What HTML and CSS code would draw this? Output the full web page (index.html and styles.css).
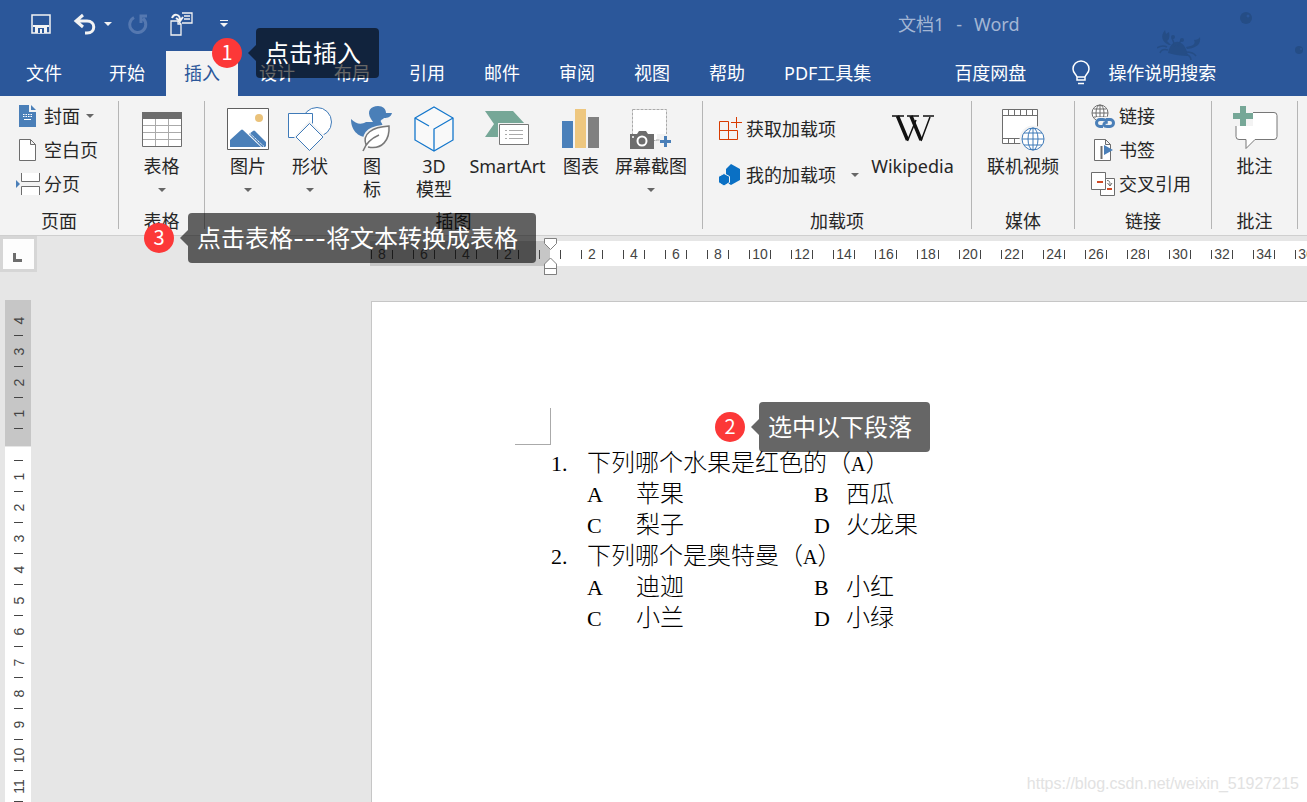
FILE: index.html
```html
<!DOCTYPE html>
<html lang="zh-CN">
<head>
<meta charset="utf-8">
<title>文档1 - Word</title>
<link rel="stylesheet" href="styles.css">
</head>
<body>
<div class="app">
  <header class="header">
    <svg class="sea" width="150" height="60" viewBox="0 0 150 60" fill="#254d86">
      <circle cx="89" cy="18" r="6"/><circle cx="142" cy="50" r="4"/>
      <circle cx="91" cy="16" r="1.5" fill="#2b579a"/><circle cx="144" cy="49" r="1" fill="#2b579a"/>
      <path d="M11 53c3-16 17-15 20 3-6 0-14-1-20-3z"/>
      <path d="M12 45c-7-3-9-9-4-15l1 4 3-2c1 5 0 8-2 9l4 4zM29 47c7-1 10-3 8-7 3 0 5-1 6-3 1 6-2 11-13 12z"/>
      <circle cx="16" cy="37" r="2"/><circle cx="25" cy="40" r="2"/>
      <path d="M15 38l3 8M24 40l-3 6M10 47c-4-2-7-1-10 1M11 50c-4-1-7 0-8 3M29 52c4 0 8 1 10 4M28 54c4 1 6 3 6 6" stroke="#254d86" stroke-width="1.500" fill="none"/>
    </svg>
    <div class="title-row">
      <div class="quick">
        <button class="qbtn" aria-label="保存"><svg width="20" height="20" viewBox="0 0 20 20"><path d="M1 1h18v18H1z" fill="none" stroke="#f3f3f3" stroke-width="1.500"/><path d="M2 11h16v2H2zM4 13h12v6H4z" fill="#f3f3f3"/><path d="M7 14h6v5h-2v-4H9v4H7z" fill="#2b579a"/></svg></button>
        <button class="qbtn undo" aria-label="撤消"><svg width="24" height="22" viewBox="0 0 24 22" fill="none" stroke="#f3f3f3" stroke-width="3"><path d="M10 2L3 8l7 6M4 8h10c9 0 9 12 0 12h-2"/></svg><svg class="arrow light" width="8" height="4" viewBox="0 0 8 4"><path d="M0 0h8L4 4z"/></svg></button>
        <button class="qbtn redo" aria-label="重复"><svg width="20" height="20" viewBox="0 0 20 20" fill="none" stroke="#5578b0" stroke-width="3"><path d="M6 3.500a8 8 0 1 0 9 1M19 2h-6v7"/></svg></button>
        <button class="qbtn paste" aria-label="插入文件"><svg width="24" height="24" viewBox="0 0 24 24" fill="none" stroke="#f3f3f3" stroke-width="1.300"><path d="M1 9h7l3 3v11H1z"/><path d="M8 9v3h3M12 1h10v10H12M14 4h6M14 7h6"/><path d="M2 6c2-5 8-4 8 2M6 6l4 3 3-4" stroke-width="2"/></svg></button>
        <button class="qbtn more" aria-label="自定义快速访问工具栏"><svg width="8" height="8" viewBox="0 0 8 8" fill="#f3f3f3"><path d="M0 0h8v1H0zM0 3h8L4 7z"/></svg></button>
      </div>
      <div class="doc-title"><span>文档1</span><span>-</span><span>Word</span></div>
    </div>
    <nav class="tabs">
      <button class="tab file">文件</button>
      <button class="tab">开始</button>
      <button class="tab active">插入</button>
      <button class="tab">设计</button>
      <button class="tab">布局</button>
      <button class="tab">引用</button>
      <button class="tab">邮件</button>
      <button class="tab">审阅</button>
      <button class="tab">视图</button>
      <button class="tab">帮助</button>
      <button class="tab">PDF工具集</button>
      <button class="tab cloud">百度网盘</button>
      <button class="tab tell"><svg width="18" height="26" viewBox="0 0 18 26" fill="none" stroke="#fff" stroke-width="1.500"><path d="M5 20v-3C4 14 1 13 1 9a8 8 0 0 1 16 0c0 4-3 5-4 8v3zM5 17h8M6 23.500h6"/></svg>操作说明搜索</button>
    </nav>
  </header>

  <main>
  <section class="ribbon">
    <div class="group g-pages">
      <div class="body small">
        <button class="row"><span class="ico"><svg width="18" height="22" viewBox="0 0 18 22"><path d="M0 0h10v7h7v15H0z" fill="#4a7fb8"/><path d="M12 0l5 5h-5z" fill="#4a7fb8"/><path d="M4 9.500h9M4 11.500h9" stroke="#fff" stroke-dasharray="1.500 1"/><path d="M5 14.500h7" stroke="#fff"/></svg></span>封面<svg class="arrow" width="8" height="4" viewBox="0 0 8 4"><path d="M0 0h8L4 4z"/></svg></button>
        <button class="row"><span class="ico"><svg width="18" height="22" viewBox="0 0 18 22"><path d="M.5.500h11l5 5v16H.500z M11.500.500v5h5" fill="#fff" stroke="#6d6d6d"/></svg></span>空白页</button>
        <button class="row"><span class="ico"><svg width="24" height="22" viewBox="0 0 24 22"><path d="M5.500 0v8.500h18V0M5.500 22v-8.500h18V22" fill="#fff" stroke="#6d6d6d"/><path d="M0 7l4 4-4 4z" fill="#4a7fb8"/></svg></span>分页</button>
      </div>
      <div class="label">页面</div>
    </div>
    <div class="group g-table">
      <div class="body">
        <button class="big"><span class="pic"><svg width="40" height="35" viewBox="0 0 40 35"><path d="M.5.500h39v34H.500z" fill="#fff" stroke="#6d6d6d"/><path d="M0 0h40v7H0z" fill="#6d6d6d"/><path d="M1 13.500h38M1 20.500h38M1 27.500h38M13.500 7v27M26.500 7v27" stroke="#aaa"/></svg></span>表格<svg class="arrow" width="8" height="4" viewBox="0 0 8 4"><path d="M0 0h8L4 4z"/></svg></button>
      </div>
      <div class="label">表格</div>
    </div>
    <div class="group g-art">
      <div class="body">
        <button class="big"><span class="pic"><svg width="42" height="42" viewBox="0 0 42 42"><path d="M.5.500h41v41H.500z" fill="#fff" stroke="#5f5f5f"/><circle cx="32" cy="10" r="4" fill="#eac27a"/><path d="M3 39v-7l11-10q1-1 2 0l18 17zM22 26l4-3q1-1 2 0l11 11v4l-1 1h-3z" fill="#4a7fb8"/><path d="M23 25.500l14 13" stroke="#fff" stroke-dasharray="1.500 .7"/></svg></span>图片<svg class="arrow" width="8" height="4" viewBox="0 0 8 4"><path d="M0 0h8L4 4z"/></svg></button>
        <button class="big"><span class="pic"><svg width="44" height="44" viewBox="0 0 44 44" fill="#fff" stroke="#3f7ab8"><circle cx="29" cy="15" r="14.500"/><path d="M.5 6.500h24v24H.500z"/><path d="M21.500 16.500L36 31 21.500 45 8 31z" transform="translate(0 -1)" stroke="#f3f3f3" stroke-width="3"/><path d="M21.500 16.500L35 30 21.500 43.500 8 30z"/></svg></span>形状<svg class="arrow" width="8" height="4" viewBox="0 0 8 4"><path d="M0 0h8L4 4z"/></svg></button>
        <button class="big"><span class="pic"><svg width="42" height="46" viewBox="0 0 42 46"><path d="M20 13C15 5 20 0 27 0c5 0 8 3 8 7h6c-1 4-4 5-8 5-2 2-4 2-3 4 3 4 2 9-1 12-8 7-29 5-29-15 5 5 10 6 15 3l7 0z" fill="#4a7fb8"/><path d="M13 40c-1-16 7-19 25-20 1 15-8 27-22 21" fill="#fff" stroke="#f3f3f3" stroke-width="3"/><path d="M15 39c-4-11 6-18 23-19 1 14-7 24-21 21M12 45c3-8 9-13 16-16" fill="none" stroke="#777" stroke-width="1.500"/></svg></span>图<br>标</button>
        <button class="big"><span class="pic"><svg width="40" height="46" viewBox="0 0 40 46" fill="#fff" stroke="#1477cc" stroke-width="1.300"><path d="M1 12L20 1l19 11v22L20 45 1 34z" fill="#f9f9f9"/><path d="M1 12l14 8M39 12L20 23v22" fill="none"/></svg></span>3D<br>模型</button>
        <button class="big wide"><span class="pic"><svg width="45" height="36" viewBox="0 0 45 36"><path d="M0 0h28l12 13-12 13H0l9-13z" fill="#76a797"/><path d="M13 12h32v24H13z" fill="#f3f3f3"/><path d="M14.500 13.500h29v20h-29z" fill="#fff" stroke="#777"/><path d="M20 19.500h2M24 19.500h14M20 23.500h2M24 23.500h14M20 27.500h2M24 27.500h14" stroke="#aaa"/></svg></span>SmartArt</button>
        <button class="big"><span class="pic"><svg width="38" height="40" viewBox="0 0 38 40"><path d="M0 12h11v27H0z" fill="#4a80ba"/><path d="M13 0h11v39H13z" fill="#eec77f"/><path d="M26 8h11v31H26z" fill="#808080"/></svg></span>图表</button>
        <button class="big shot"><span class="pic"><svg width="42" height="41" viewBox="0 0 42 41"><path d="M2.500.500h34v31h-34z" fill="#fff" stroke="#aaa" stroke-dasharray="3 1"/><path d="M27 25h15v15H27z" fill="#f3f3f3"/><path d="M0 25h7l2-3h7l2 3h6v15H0z" fill="#6d6d6d"/><circle cx="12" cy="32" r="4.500" fill="#6d6d6d" stroke="#fff" stroke-width="2"/><circle cx="3" cy="28" r="1" fill="#fff"/><path d="M26 31h3.500" stroke="#aaa"/><path d="M34 27h3v4h4v3h-4v4h-3v-4h-4v-3h4z" fill="#4a7fb8"/></svg></span>屏幕截图<svg class="arrow" width="8" height="4" viewBox="0 0 8 4"><path d="M0 0h8L4 4z"/></svg></button>
      </div>
      <div class="label">插图</div>
    </div>
    <div class="group g-addins">
      <div class="body">
        <div class="pair">
          <button class="row"><span class="ico"><svg width="23" height="24" viewBox="0 0 23 24" fill="none" stroke="#d83b01"><path d="M.5 22.500v-18h9v18zM.5 13.500h18v9H.500M17.500 0v11M12 5.500h11"/></svg></span>获取加载项</button>
          <button class="row"><span class="ico"><svg width="22" height="22" viewBox="0 0 22 22" fill="#0a70c4"><path d="M12 0l9 5v11l-9 5-5-3V5z"/><path d="M5 9.500l5.500 3v6L5 22-.500 18.500v-6z" stroke="#f3f3f3"/></svg></span>我的加载项<svg class="arrow far" width="8" height="4" viewBox="0 0 8 4"><path d="M0 0h8L4 4z"/></svg></button>
        </div>
        <button class="big wide"><span class="pic"><svg width="42" height="28" viewBox="0 0 42 28" fill="none" stroke="#111"><path d="M0 1h12M15 1h12M31 1h11" stroke-width="1.500"/><path d="M5.500 1l10 24M19 1l10 24" stroke-width="3.500"/><path d="M15.500 26L24 5M29 26L38 2" stroke-width="1.500"/></svg></span>Wikipedia</button>
      </div>
      <div class="label">加载项</div>
    </div>
    <div class="group g-media">
      <div class="body">
        <button class="big"><span class="pic"><svg width="43" height="44" viewBox="0 0 43 44"><path d="M.5 2.500h35v34H.500z" fill="#fff" stroke="#6d6d6d"/><path d="M1 8.500h34M1 31.500h18M6.500 3v5M12.500 3v5M18.500 3v5M24.500 3v5M30.500 3v5M6.500 32v5M12.500 32v5" stroke="#6d6d6d"/><circle cx="31" cy="32" r="13.500" fill="#f3f3f3"/><g fill="none" stroke="#3f7ab8"><circle cx="31" cy="32" r="11" fill="#fff"/><ellipse cx="31" cy="32" rx="5" ry="11"/><path d="M31 21v22M20 32h22M22 26h18M22 38h18"/></g></svg></span>联机视频</button>
      </div>
      <div class="label">媒体</div>
    </div>
    <div class="group g-links">
      <div class="body small">
        <button class="row"><span class="ico"><svg width="24" height="24" viewBox="0 0 24 24" fill="none"><g stroke="#6d6d6d"><circle cx="9" cy="9" r="8" fill="#fff"/><ellipse cx="9" cy="9" rx="4" ry="8"/><path d="M9 1v16M1 9h16M3 5h12M3 13h12"/></g><path d="M5 13h18v11H5z" fill="#f3f3f3"/><path d="M12 22.500h-3a3.500 3.500 0 0 1 0-7h3c3 0 4 2 3 4M15 15.500h4a3.500 3.500 0 0 1 0 7h-3c-3 0-4-2-2-4" stroke="#4a7fb8" stroke-width="3"/></svg></span>链接</button>
        <button class="row"><span class="ico"><svg width="20" height="22" viewBox="0 0 20 22"><path d="M1.500.500h11l5 5v16h-16zM12.500.500v5h5" fill="#fff" stroke="#6d6d6d"/><path d="M8.500 7v13" stroke="#6d6d6d" stroke-width="2"/><path d="M11 6l9 5-9 5z" fill="#4a7fb8"/></svg></span>书签</button>
        <button class="row"><span class="ico"><svg width="24" height="24" viewBox="0 0 24 24"><path d="M9.500 6.500h14v17h-14z" fill="#fff" stroke="#6d6d6d"/><path d="M.5.500h14v17H.500z" fill="#fff" stroke="#6d6d6d"/><path d="M6 9h6v2H6zM16 16h5v2h-5z" fill="#d04a26"/><path d="M16 8.500c3 0 3 2 3 5M16.500 11l2.500 3 2-3" fill="none" stroke="#6d6d6d"/></svg></span>交叉引用</button>
      </div>
      <div class="label">链接</div>
    </div>
    <div class="group g-comment">
      <div class="body">
        <button class="big"><span class="pic"><svg width="46" height="48" viewBox="0 0 46 48"><path d="M6 7.500h36q3 0 3 3v21q0 3-3 3H23l-9 9v-9H7q-3 0-3-3v-20z" fill="#fff" stroke="#777"/><path d="M0 0h21v21H0z" fill="#f3f3f3"/><path d="M8 1h6v7h7v6h-7v7H8v-7H1V8h7z" fill="#76a797"/></svg></span>批注</button>
      </div>
      <div class="label">批注</div>
    </div>
  </section>

  <section class="workspace">
    <aside class="rail">
      <button class="corner" aria-label="制表符"><svg width="9" height="9" viewBox="0 0 9 9"><path d="M0 0h3v6h6v3H0z" fill="#6d6d6d"/></svg></button>
      <div class="vruler">
        <div class="vpart shade"><span>4</span><span>3</span><span>2</span><span>1</span></div>
        <div class="vpart"><span class="zero"></span><span>1</span><span>2</span><span>3</span><span>4</span><span>5</span><span>6</span><span>7</span><span>8</span><span>9</span><span>10</span><span>11</span></div>
      </div>
    </aside>
    <div class="canvas">
      <div class="hruler">
        <div class="track">
          <span>8</span><span>6</span><span>4</span><span>2</span><span></span><span>2</span><span>4</span><span>6</span><span>8</span><span>10</span><span>12</span><span>14</span><span>16</span><span>18</span><span>20</span><span>22</span><span>24</span><span>26</span><span>28</span><span>30</span><span>32</span><span>34</span><span>36</span>
        </div>
      </div>
      <svg class="indent" width="13" height="38" viewBox="0 0 13 38" fill="#fff" stroke="#808080"><path d="M.5.500h12v5l-6 6-6-6zM.5 37v-11l6-6 6 6v10.500H.500zM.5 30.500h12"/></svg>
      <article class="paper">
        <div class="crop"></div>
        <div class="text">
          <div class="question"><b>1.</b><span>下列哪个水果是红色的（<b>A</b>）</span></div>
          <div class="options"><b>A</b><span>苹果</span><b>B</b><span>西瓜</span><b>C</b><span>梨子</span><b>D</b><span>火龙果</span></div>
          <div class="question"><b>2.</b><span>下列哪个是奥特曼（<b>A</b>）</span></div>
          <div class="options"><b>A</b><span>迪迦</span><b>B</b><span>小红</span><b>C</b><span>小兰</span><b>D</b><span>小绿</span></div>
        </div>
      </article>
    </div>
  </section>
  </main>

  <div class="note n1"><span class="num">1</span><span class="tip">点击插入</span></div>
  <div class="note n2"><span class="num">2</span><span class="tip">选中以下段落</span></div>
  <div class="note n3"><span class="num">3</span><span class="tip">点击表格<i>---</i>将文本转换成表格</span></div>
  <div class="watermark">https://blog.csdn.net/weixin_51927215</div>
</div>
</body>
</html>
```
FILE: styles.css
```css
* { box-sizing: border-box; }
body {
  margin: 0;
  font-family: "Noto Sans", "Noto Sans CJK SC", sans-serif;
  font-size: 18px;
  color: #262626;
  background: #e6e6e6;
}
button {
  border: 0;
  padding: 0;
  background: none;
  font: inherit;
  color: inherit;
}
svg { display: block; flex: none; }
.app {
  position: relative;
  height: 100vh;
  display: flex;
  flex-direction: column;
  overflow: hidden;
}
main { flex: 1; min-height: 0; display: flex; flex-direction: column; }

/* Header */
.header { position: relative; background: #2b579a; color: #fff; }
.sea { position: absolute; right: 0; top: 0; }
.title-row { position: relative; display: flex; align-items: center; height: 48px; }
.quick { display: flex; align-items: center; width: 898px; padding-left: 31px; }
.qbtn { display: flex; align-items: center; }
.undo { margin-left: 22px; gap: 7px; }
.redo { margin-left: 16px; }
.paste { margin-left: 22px; }
.more { margin-left: 26px; }
.arrow { fill: #666; }
.arrow.light { fill: #f3f3f3; }
.doc-title { display: flex; gap: 12px; color: #a3b6d4; line-height: 24px; }
.tabs { position: relative; display: flex; gap: 3px; height: 48px; padding: 3px 0 0 8px; }
.tab { flex: none; padding: 0 18px 2px; line-height: 24px; white-space: nowrap; }
.tab.active { background: #f3f3f3; color: #2b579a; }
.tab.file { margin-right: 8px; }
.cloud { margin-left: 44px; }
.tell { display: flex; align-items: center; gap: 18px; margin-left: 7px; }

/* Ribbon */
.ribbon {
  display: flex;
  flex: none;
  padding: 5px 0 6px;
  background: #f3f3f3;
  border-bottom: 1px solid #cfcfcf;
  overflow: hidden;
}
.group { flex: none; display: flex; flex-direction: column; border-right: 1px solid #b5b5b5; }
.body { display: flex; justify-content: center; height: 112px; }
.label { text-align: center; line-height: 16px; }
.small { flex-direction: column; justify-content: flex-start; gap: 4px; padding-left: 16px; }
.row { display: flex; align-items: center; height: 30px; line-height: 24px; white-space: nowrap; }
.ico { display: flex; justify-content: center; width: 24px; margin-right: 4px; }
.row .arrow { margin-left: 6px; }
.row .arrow.far { margin-left: 15px; }
.big {
  display: block;
  width: 62px;
  padding-top: 2px;
  line-height: 23px;
  white-space: nowrap;
  text-align: center;
  align-self: flex-start;
}
.pic { display: flex; align-items: center; justify-content: center; height: 52px; }
.big .arrow { margin: 10px auto 0; }
.big.wide { width: 85px; }
.big.shot { width: 78px; }
.g-pages { width: 119px; }
.g-table { width: 86px; }
.g-art { width: 498px; }
.g-addins { width: 269px; }
.g-addins .body { justify-content: flex-start; gap: 11px; padding-left: 15px; }
.g-media { width: 103px; }
.g-media .big { width: 80px; }
.g-links { width: 137px; }
.g-comment { width: 86px; }
.pair { padding-top: 5px; }
.pair .row { height: 46px; }

/* Workspace */
.workspace { flex: 1; min-height: 0; display: flex; }
.rail { width: 37px; flex: none; }
.corner {
  display: flex;
  align-items: flex-end;
  width: 37px;
  height: 36px;
  padding: 0 0 7px 10px;
  background: #fdfdfd;
  border: 3px solid #d6d6d6;
}
.vruler { width: 26px; margin: 28px 0 0 5px; font: 14px/14px "Liberation Sans", Arial, sans-serif; color: #444; }
.vpart { background: #fff; }
.vpart.shade { background: #c6c6c6; height: 146px; padding-top: 5px; margin-bottom: 1px; }
.vpart span {
  position: relative;
  display: flex;
  align-items: center;
  justify-content: center;
  height: 31px;
  transform: rotate(-90deg);
  width: 31px;
  margin-left: -2px;
}
.vpart span::before { content: ""; position: absolute; left: 0; width: 1px; height: 9px; background: #444; }
.vpart .zero { height: 14px; width: 14px; margin-left: 6px; }
.canvas { position: relative; flex: 1; min-width: 0; padding-left: 333px; display: flex; flex-direction: column; }
.hruler {
  height: 25px;
  margin-top: 5px;
  overflow: hidden;
  background: linear-gradient(to right, #c6c6c6 180px, #fff 180px);
  font: 14px/27px "Liberation Sans", Arial, sans-serif;
  color: #444;
}
.track { display: flex; margin-left: -9px; }
.track span {
  position: relative;
  flex: none;
  display: flex;
  justify-content: center;
  align-items: center;
  width: 42px;
  height: 27px;
}
.track span::before, .track span::after { content: ""; position: absolute; width: 1px; height: 9px; background: #444; }
.track span::before { left: 10px; }
.track span::after { right: 10px; }
.indent { position: absolute; left: 507px; top: 2px; }
.paper { flex: 1; margin: 35px 0 0 1px; background: #fff; border: solid #c6c6c6; border-width: 1px 0 0 1px; padding: 106px 0 0 143px; }
.crop { width: 36px; height: 37px; border: solid #aaa; border-width: 0 1px 1px 0; }
.text {
  padding-left: 36px;
  font: 24px/31px "Noto Sans CJK SC", sans-serif;
  font-weight: 300;
  color: #000;
}
.text b { font-family: "Liberation Serif", serif; font-size: 22px; font-weight: 400; line-height: 31px; }
.text span b { font-size: 20px; line-height: 20px; }
.question, .options { display: grid; align-items: baseline; grid-auto-rows: 31px; }
.question { grid-template-columns: 36px auto; }
.options { grid-template-columns: 49px 178px 32px auto; padding-left: 36px; }

/* Numbered callouts */
.note { position: absolute; display: flex; align-items: center; gap: 14px; color: #fff; }
.n1 { left: 212px; top: 28px; }
.n2 { left: 715px; top: 402px; }
.n3 { left: 144px; top: 213px; }
.num {
  width: 30px;
  height: 30px;
  border-radius: 50%;
  background: #fc3838;
  text-align: center;
  font: 20px/28px "Noto Sans CJK SC", sans-serif;
}
.tip {
  position: relative;
  height: 50px;
  padding: 0 18px 0 9px;
  border-radius: 4px;
  background: rgba(0, 0, 0, 0.6);
  font-size: 24px;
  line-height: 50px;
  white-space: nowrap;
}
.tip::before {
  content: "";
  position: absolute;
  left: -8px;
  top: 17px;
  border: solid transparent;
  border-width: 8px 8px 8px 0;
  border-right-color: rgba(0, 0, 0, 0.6);
}
.tip i { font-family: Inter, sans-serif; font-style: normal; line-height: 24px; }
.watermark { position: absolute; right: 8px; bottom: 8px; font: 16px/20px "Liberation Sans", Arial, sans-serif; color: #e2e2e2; }
```
